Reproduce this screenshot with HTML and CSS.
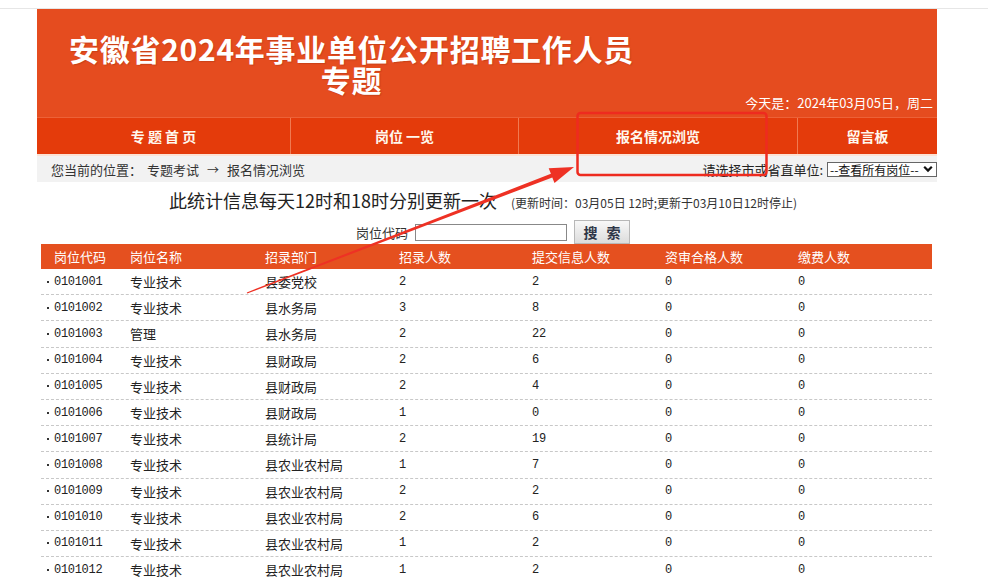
FILE: index.html
```html
<!DOCTYPE html>
<html lang="zh-CN">
<head>
<meta charset="utf-8">
<title>安徽省2024年事业单位公开招聘工作人员专题</title>
<link rel="stylesheet" href="styles.css">
</head>
<body>
<div class="topline"></div>
<div class="page">
  <div class="header">
    <div class="title"><div class="t1">安徽省2024年事业单位公开招聘工作人员</div><div class="t2">专题</div></div>
    <div class="date">今天是：2024年03月05日，周二</div>
  </div>
  <div class="nav">
    <div class="nav-item">专 题 首 页</div>
    <div class="nav-item">岗位 一览</div>
    <div class="nav-item">报名情况浏览</div>
    <div class="nav-item">留言板</div>
  </div>
  <div class="strip"></div>
  <div class="crumb">
    <div class="crumb-left"><span class="here">您当前的位置：</span><span>专题考试</span><span class="arrow">→</span><span>报名情况浏览</span></div>
    <div class="crumb-right">
      <span class="pick">请选择市或省直单位:</span>
      <div class="select"><span>--查看所有岗位--</span><svg width="10" height="8" viewBox="0 0 10 8"><path d="M1.2 1.8 L5 5.6 L8.8 1.8" fill="none" stroke="#111" stroke-width="2.2"/></svg></div>
    </div>
  </div>
  <div class="stat"><span class="stat-main">此统计信息每天12时和18时分别更新一次</span><span class="stat-note">(更新时间：03月05日 12时;更新于03月10日12时停止)</span></div>
  <div class="search">
    <span class="search-label">岗位代码</span>
    <input class="search-input" type="text">
    <button class="search-btn">搜 索</button>
  </div>
  <div class="table">
    <div class="thead">
      <span>岗位代码</span><span>岗位名称</span><span>招录部门</span><span>招录人数</span><span>提交信息人数</span><span>资审合格人数</span><span>缴费人数</span>
    </div>
    <div class="row"><span class="code"><i class="dot"></i>0101001</span><span>专业技术</span><span>县委党校</span><span class="num">2</span><span class="num">2</span><span class="num">0</span><span class="num">0</span></div>
    <div class="row"><span class="code"><i class="dot"></i>0101002</span><span>专业技术</span><span>县水务局</span><span class="num">3</span><span class="num">8</span><span class="num">0</span><span class="num">0</span></div>
    <div class="row"><span class="code"><i class="dot"></i>0101003</span><span>管理</span><span>县水务局</span><span class="num">2</span><span class="num">22</span><span class="num">0</span><span class="num">0</span></div>
    <div class="row"><span class="code"><i class="dot"></i>0101004</span><span>专业技术</span><span>县财政局</span><span class="num">2</span><span class="num">6</span><span class="num">0</span><span class="num">0</span></div>
    <div class="row"><span class="code"><i class="dot"></i>0101005</span><span>专业技术</span><span>县财政局</span><span class="num">2</span><span class="num">4</span><span class="num">0</span><span class="num">0</span></div>
    <div class="row"><span class="code"><i class="dot"></i>0101006</span><span>专业技术</span><span>县财政局</span><span class="num">1</span><span class="num">0</span><span class="num">0</span><span class="num">0</span></div>
    <div class="row"><span class="code"><i class="dot"></i>0101007</span><span>专业技术</span><span>县统计局</span><span class="num">2</span><span class="num">19</span><span class="num">0</span><span class="num">0</span></div>
    <div class="row"><span class="code"><i class="dot"></i>0101008</span><span>专业技术</span><span>县农业农村局</span><span class="num">1</span><span class="num">7</span><span class="num">0</span><span class="num">0</span></div>
    <div class="row"><span class="code"><i class="dot"></i>0101009</span><span>专业技术</span><span>县农业农村局</span><span class="num">2</span><span class="num">2</span><span class="num">0</span><span class="num">0</span></div>
    <div class="row"><span class="code"><i class="dot"></i>0101010</span><span>专业技术</span><span>县农业农村局</span><span class="num">2</span><span class="num">6</span><span class="num">0</span><span class="num">0</span></div>
    <div class="row"><span class="code"><i class="dot"></i>0101011</span><span>专业技术</span><span>县农业农村局</span><span class="num">1</span><span class="num">2</span><span class="num">0</span><span class="num">0</span></div>
    <div class="row"><span class="code"><i class="dot"></i>0101012</span><span>专业技术</span><span>县农业农村局</span><span class="num">1</span><span class="num">2</span><span class="num">0</span><span class="num">0</span></div>
  </div>
</div>
<svg class="annot" width="988" height="578" viewBox="0 0 988 578">
  <rect x="577.5" y="113" width="189" height="62" rx="3" fill="none" stroke="#EE2B1F" stroke-width="2.5"/>
  <polygon points="246.8,292.4 550.9,173.8 548.7,168.2 574,167 554.5,183.1 552.3,177.5 247.2,293.6" fill="#EE3124"/>
</svg>
</body>
</html>
```
FILE: styles.css
```css
html, body {
  margin: 0;
  padding: 0;
  background: #fff;
}
body {
  font-family: "Noto Sans CJK SC", "Noto Sans", sans-serif;
  color: #333;
  position: relative;
}
.topline {
  height: 8px;
  border-bottom: 1px solid #e6e6e6;
}
.page {
  width: 900px;
  margin-left: 37px;
}
.header {
  height: 108px;
  background: #E54C1F;
  display: flex;
  flex-direction: column;
}
.title {
  margin-left: 13px;
  width: 603px;
  padding-top: 24px;
  text-align: center;
  color: #fff;
  font-size: 30px;
  font-weight: 700;
  line-height: 31px;
  letter-spacing: 0.7px;
  white-space: nowrap;
  text-shadow: 1px 1px 1px rgba(120, 30, 0, 0.25);
}
.date {
  margin-top: auto;
  margin-bottom: 10px;
  align-self: flex-end;
  padding-right: 4px;
  color: #fff;
  font-size: 13px;
  line-height: 16px;
}
.nav {
  display: grid;
  grid-template-columns: 253px 228px 279px 140px;
  height: 37px;
  background: #E43B0B;
  border-top: 1px solid #EC6238;
  box-sizing: border-box;
}
.nav-item {
  text-align: center;
  line-height: 36px;
  color: #fff8ee;
  font-size: 14px;
  font-weight: 700;
  box-sizing: border-box;
}
.nav-item + .nav-item {
  border-left: 1px solid #F07A52;
}
.strip {
  height: 2px;
  background: #FCE2D4;
}
.crumb {
  height: 26px;
  background: #F2F2F2;
  display: flex;
  align-items: center;
  justify-content: space-between;
  padding-left: 14px;
  font-size: 13px;
  color: #333;
}
.here {
  margin-right: 5px;
}
.arrow {
  margin: 0 8px;
  font-size: 12px;
}
.crumb-right {
  display: flex;
  align-items: center;
  gap: 4px;
}
.pick {
  color: #222;
}
.select {
  width: 110px;
  height: 15px;
  box-sizing: border-box;
  border: 1px solid #666;
  background: #fff;
  display: flex;
  align-items: center;
  justify-content: space-between;
  padding: 0 3px 0 2px;
  font-size: 12px;
  line-height: 13px;
  color: #111;
}
.stat {
  margin-top: 6px;
  line-height: 24px;
  text-align: center;
  padding-right: 8px;
  white-space: nowrap;
}
.stat-main {
  font-size: 18px;
  color: #222;
}
.stat-note {
  font-size: 12px;
  color: #333;
  margin-left: 14px;
}
.search {
  margin-top: 5px;
  height: 24px;
  display: flex;
  align-items: center;
  justify-content: center;
  padding-left: 12px;
}
.search-label {
  font-size: 13px;
  color: #333;
  margin-right: 7px;
}
.search-input {
  width: 152px;
  height: 17px;
  box-sizing: border-box;
  border: 1px solid #888;
  margin: 0;
  padding: 0;
}
.search-btn {
  margin-left: 7px;
  width: 56px;
  height: 24px;
  box-sizing: border-box;
  border: 1px solid #b8b8b8;
  background: linear-gradient(#f8f8f8, #dcdcdc);
  font-family: "Noto Sans CJK SC", sans-serif;
  font-size: 14px;
  font-weight: 700;
  color: #2e3648;
  letter-spacing: 3px;
  padding: 0 0 0 3px;
}
.table {
  margin-left: 4px;
  width: 891px;
}
.thead, .row {
  display: grid;
  grid-template-columns: 89px 135px 134px 133px 133px 133px 134px;
}
.thead {
  height: 25px;
  background: #E5501F;
  color: #fff;
  font-size: 13px;
  line-height: 25px;
}
.thead span:first-child {
  padding-left: 13px;
}
.row {
  height: 26.2px;
  box-sizing: border-box;
  border-bottom: 1px dashed #c8c8c8;
  align-items: center;
  font-size: 13px;
  color: #222;
}
.code, .num {
  font-family: "Liberation Mono", monospace;
  font-size: 12px;
  letter-spacing: -0.3px;
}
.code {
  padding-left: 6px;
  display: flex;
  align-items: center;
}
.dot {
  display: inline-block;
  width: 2px;
  height: 2px;
  background: #333;
  margin-right: 5px;
}
.annot {
  position: absolute;
  top: 0;
  left: 0;
  pointer-events: none;
}
```
